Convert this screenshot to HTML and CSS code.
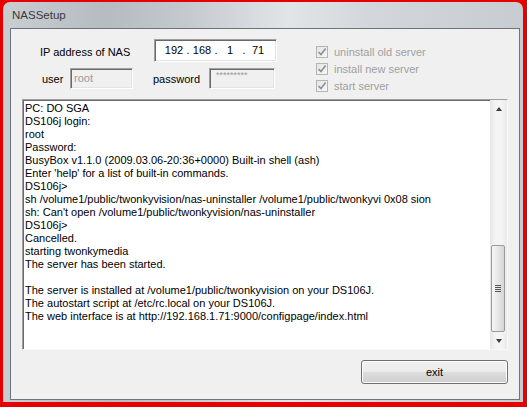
FILE: index.html
```html
<!DOCTYPE html>
<html lang="en">
<head>
    <meta charset="UTF-8">
    <title>NASSetup</title>
    <link rel="stylesheet" href="styles.css">
</head>
<body>
    <div class="window">
        <div class="titlebar">NASSetup</div>
        <div class="client">
            <div class="top">
                <div class="fields">
                    <div class="row row-ip">
                        <span class="lbl lbl-ip">IP address of NAS</span>
                        <div class="ip-box">
                            <span class="oct o1">192</span><span class="dot">.</span>
                            <span class="oct o2">168</span><span class="dot">.</span>
                            <span class="oct o3">1</span><span class="dot">.</span>
                            <span class="oct o4">71</span>
                        </div>
                    </div>
                    <div class="row row-login">
                        <span class="lbl lbl-user">user</span>
                        <div class="field field-user">root</div>
                        <span class="lbl lbl-pass">password</span>
                        <div class="field field-pass">*********</div>
                    </div>
                </div>
                <div class="options">
                    <div class="check"><span class="box"><svg viewBox="0 0 10 10" width="10" height="10"><path d="M1.5 5 L4 7.6 L8.6 1.6" fill="none" stroke="#8f8f8f" stroke-width="1.6"/></svg></span>uninstall old server</div>
                    <div class="check"><span class="box"><svg viewBox="0 0 10 10" width="10" height="10"><path d="M1.5 5 L4 7.6 L8.6 1.6" fill="none" stroke="#8f8f8f" stroke-width="1.6"/></svg></span>install new server</div>
                    <div class="check"><span class="box"><svg viewBox="0 0 10 10" width="10" height="10"><path d="M1.5 5 L4 7.6 L8.6 1.6" fill="none" stroke="#8f8f8f" stroke-width="1.6"/></svg></span>start server</div>
                </div>
            </div>

            <div class="console">
                <div class="console-text">PC: DO SGA
DS106j login:
root
Password:
BusyBox v1.1.0 (2009.03.06-20:36+0000) Built-in shell (ash)
Enter 'help' for a list of built-in commands.
DS106j&gt;
sh /volume1/public/twonkyvision/nas-uninstaller /volume1/public/twonkyvi 0x08 sion
sh: Can't open /volume1/public/twonkyvision/nas-uninstaller
DS106j&gt;
Cancelled.
starting twonkymedia
The server has been started.

The server is installed at /volume1/public/twonkyvision on your DS106J.
The autostart script at /etc/rc.local on your DS106J.
The web interface is at http://192.168.1.71:9000/configpage/index.html</div>
                <div class="scrollbar">
                    <div class="sb-btn"><span class="arrow up"></span></div>
                    <div class="sb-track"></div>
                    <div class="sb-thumb"><span class="grip"></span></div>
                    <div class="sb-btn"><span class="arrow down"></span></div>
                </div>
            </div>

            <div class="actions">
                <button class="exit">exit</button>
            </div>
        </div>
    </div>
</body>
</html>
```

FILE: styles.css
```css
body {
    margin: 0;
    width: 527px;
    height: 407px;
    overflow: hidden;
    background-color: #e60000;
    font-family: "Liberation Sans", Arial, sans-serif;
    font-size: 11px;
    color: #000;
}
.window {
    margin: 2px 4px 0 3px;
    width: 520px;
    height: 400px;
    border-radius: 7px 7px 0 0;
    background: linear-gradient(90deg, #c9ced3 0%, #b5bbc1 20%, #c4c9ce 35%, #e2e5e8 55%, #d3d7db 70%, #c7ccd1 100%);
    display: flex;
    flex-direction: column;
}
.titlebar {
    height: 26px;
    padding-left: 9px;
    line-height: 26px;
    font-size: 11.5px;
    color: #3a3a3a;
    flex-shrink: 0;
}
.client {
    margin: 0 3px 2px 7px;
    flex: 1;
    background-color: #f0f0f0;
    border: 1px solid #6f7479;
    box-sizing: border-box;
}

/* top section */
.top {
    display: flex;
    height: 70px;
    padding-top: 10px;
    box-sizing: border-box;
}
.fields {
    width: 266px;
}
.row {
    display: flex;
    align-items: center;
}
.row-ip {
    height: 23px;
}
.row-login {
    height: 21px;
    margin-top: 6px;
}
.lbl-ip {
    margin-left: 29px;
    width: 114px;
    padding-top: 2px;
}
.lbl-user {
    margin-left: 31px;
    width: 28px;
}
.lbl-pass {
    margin-left: 20px;
    width: 56px;
}
.ip-box {
    width: 123px;
    height: 23px;
    box-sizing: border-box;
    background-color: #fff;
    border-top: 1px solid #a0a0a0;
    border-left: 1px solid #a0a0a0;
    border-right: 1px solid #fff;
    border-bottom: 1px solid #fff;
    box-shadow: inset 1px 1px 0 #696969, inset -1px -1px 0 #e3e3e3;
    display: flex;
    align-items: center;
    padding-left: 8px;
    padding-bottom: 2px;
}
.oct {
    display: inline-block;
    width: 22px;
    text-align: center;
}
.o3 { width: 22px; }
.dot {
    display: inline-block;
    width: 6px;
    text-align: center;
}
.field {
    height: 21px;
    box-sizing: border-box;
    background-color: #f0f0f0;
    border-top: 1px solid #a0a0a0;
    border-left: 1px solid #a0a0a0;
    border-right: 1px solid #fff;
    border-bottom: 1px solid #fff;
    box-shadow: inset 1px 1px 0 #696969, inset -1px -1px 0 #e3e3e3;
    color: #9a9a9a;
    padding-left: 3px;
    line-height: 19px;
}
.field-user {
    width: 63px;
}
.field-pass {
    width: 66px;
    font-size: 9px;
    line-height: 12px;
    padding-left: 6px;
}

.options {
    margin-left: 39px;
    padding-top: 4px;
}
.check {
    height: 17px;
    display: flex;
    align-items: center;
    color: #a0a0a0;
}
.box {
    width: 12px;
    height: 12px;
    box-sizing: border-box;
    border: 1px solid #b4b4b4;
    background: linear-gradient(135deg, #e6e6e6, #f6f6f6);
    margin-right: 6px;
    display: flex;
    align-items: center;
    justify-content: center;
}

/* console output */
.console {
    margin-left: 11px;
    width: 486px;
    height: 251px;
    box-sizing: border-box;
    background-color: #fff;
    border-top: 1px solid #a0a0a0;
    border-left: 1px solid #a0a0a0;
    border-right: 1px solid #f8f8f8;
    border-bottom: 1px solid #f8f8f8;
    box-shadow: inset 1px 1px 0 #696969;
    display: flex;
}
.console-text {
    flex: 1;
    padding: 2px 0 0 2px;
    white-space: pre;
    line-height: 13px;
    overflow: hidden;
}
.scrollbar {
    width: 17px;
    display: flex;
    flex-direction: column;
    background: linear-gradient(90deg, #e6e6e6, #f4f4f4 30%, #f4f4f4 70%, #e9e9e9);
}
.sb-btn {
    height: 17px;
    display: flex;
    align-items: center;
    justify-content: center;
}
.sb-track {
    flex: 1;
}
.sb-thumb {
    height: 87px;
    margin: 0 2px 0 1px;
    box-sizing: border-box;
    border: 1px solid #9a9a9a;
    border-radius: 2px;
    background: linear-gradient(90deg, #f6f6f6, #e6e6e6 50%, #d6d6d6);
    display: flex;
    align-items: center;
    justify-content: center;
}
.grip {
    width: 6px;
    height: 7px;
    background: repeating-linear-gradient(180deg, #555 0, #555 1px, transparent 1px, transparent 2px);
}
.arrow {
    width: 0;
    height: 0;
    border-left: 3.5px solid transparent;
    border-right: 3.5px solid transparent;
}
.arrow.up {
    border-bottom: 4px solid #3c3c3c;
}
.arrow.down {
    border-top: 4px solid #3c3c3c;
}

/* bottom button */
.actions {
    display: flex;
    justify-content: flex-end;
    padding-right: 11px;
    margin-top: 10px;
}
.exit {
    width: 147px;
    height: 24px;
    font-family: "Liberation Sans", Arial, sans-serif;
    font-size: 11px;
    color: #000;
    border: 1px solid #707070;
    border-radius: 3px;
    background: linear-gradient(180deg, #f2f2f2 0%, #ebebeb 50%, #dddddd 51%, #cfcfcf 100%);
    box-shadow: inset 0 0 0 1px #fcfcfc;
    padding: 0;
}
```
